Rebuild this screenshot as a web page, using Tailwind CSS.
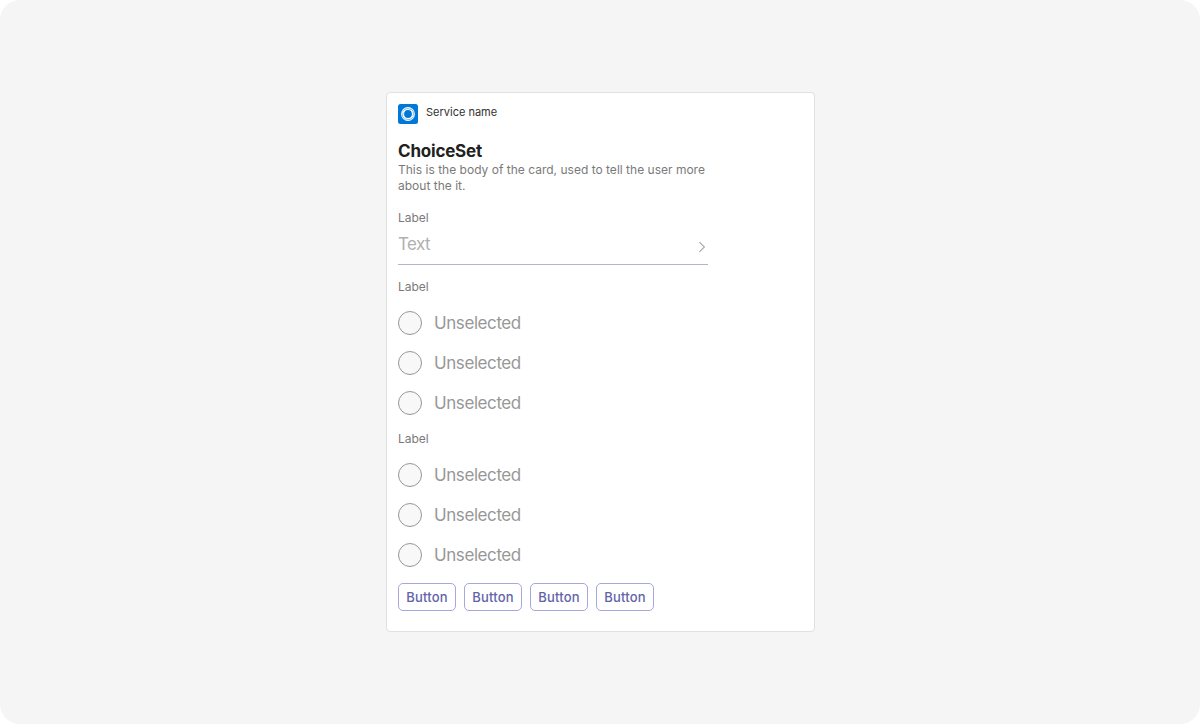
<!DOCTYPE html>
<html lang="en">
<head>
<meta charset="utf-8">
<title>ChoiceSet card</title>
<script src="https://cdn.jsdelivr.net/npm/@tailwindcss/browser@4"></script>
</head>
<body class="bg-white font-['Inter',sans-serif]">
<main class="flex h-[724px] w-[1200px] items-start justify-center rounded-[20px] bg-[#f5f5f5] pt-[92px] pl-px">
  <article class="flex h-[540px] w-[429px] flex-col rounded-[4px] border border-[#e1e1e1] bg-white px-[11px] pt-[11px]">
    <header class="flex h-5 gap-2">
      <svg class="size-5" viewBox="0 0 20 20" fill="none">
        <rect width="20" height="20" rx="2.5" fill="#0078d7"/>
        <circle cx="10" cy="10" r="5.4" stroke="#fff" stroke-width="3"/>
        <path d="M4.6 7.4A5.8 5.8 0 0 1 13 5.7M12.6 4.4A5.8 5.8 0 0 1 15 11.8M15.6 12.6A5.8 5.8 0 0 1 7.5 14.8M7 15.6A5.8 5.8 0 0 1 5 8.6" stroke="#0078d7" stroke-width=".5"/>
      </svg>
      <span class="text-[11px] leading-4 text-[#323130]">Service name</span>
    </header>
    <h1 class="mt-4 text-[17px] leading-[23px] font-bold tracking-[-0.2px] text-[#212121]">ChoiceSet</h1>
    <p class="-mt-px w-[320px] text-[12px] leading-4 tracking-[0.01px] whitespace-nowrap text-[#7a7a7a]">This is the body of the card, used to tell the user more<br>about the it.</p>
    <label class="mt-4 text-[12px] leading-4 text-[#7a7a7a]">Label</label>
    <div class="flex h-[39px] w-[310px] justify-between border-b border-[#b4b2d4]">
      <span class="mt-[7px] text-[17px] leading-[22px] tracking-[-0.6px] text-[#b0b0b0]">Text</span>
      <svg class="mt-[15px] mr-px h-3 w-[10px]" viewBox="0 0 10 12" fill="none" stroke="#a6a6a6" stroke-width="1.1"><path d="M2.4 1.1 7.4 6l-5 4.9"/></svg>
    </div>
    <section class="mt-[14px] flex flex-col text-[17px] leading-6 tracking-[-0.42px] text-[#979797]">
      <h2 class="text-[12px] leading-4 tracking-normal text-[#7a7a7a]">Label</h2>
      <div class="mt-4 flex h-6 gap-3"><i class="size-6 rounded-full border border-[#979797] bg-[#f8f8f8]"></i><span>Unselected</span></div>
      <div class="mt-4 flex h-6 gap-3"><i class="size-6 rounded-full border border-[#979797] bg-[#f8f8f8]"></i><span>Unselected</span></div>
      <div class="mt-4 flex h-6 gap-3"><i class="size-6 rounded-full border border-[#979797] bg-[#f8f8f8]"></i><span>Unselected</span></div>
    </section>
    <section class="mt-4 flex flex-col text-[17px] leading-6 tracking-[-0.42px] text-[#979797]">
      <h2 class="text-[12px] leading-4 tracking-normal text-[#7a7a7a]">Label</h2>
      <div class="mt-4 flex h-6 gap-3"><i class="size-6 rounded-full border border-[#979797] bg-[#f8f8f8]"></i><span>Unselected</span></div>
      <div class="mt-4 flex h-6 gap-3"><i class="size-6 rounded-full border border-[#979797] bg-[#f8f8f8]"></i><span>Unselected</span></div>
      <div class="mt-4 flex h-6 gap-3"><i class="size-6 rounded-full border border-[#979797] bg-[#f8f8f8]"></i><span>Unselected</span></div>
    </section>
    <footer class="mt-4 flex gap-2 text-[13px] leading-[26px] font-medium tracking-[0.2px] text-[#6264a7]">
      <button class="h-7 w-[58px] rounded-[5px] border border-[#a6a7dc]">Button</button>
      <button class="h-7 w-[58px] rounded-[5px] border border-[#a6a7dc]">Button</button>
      <button class="h-7 w-[58px] rounded-[5px] border border-[#a6a7dc]">Button</button>
      <button class="h-7 w-[58px] rounded-[5px] border border-[#a6a7dc]">Button</button>
    </footer>
  </article>
</main>
</body>
</html>
